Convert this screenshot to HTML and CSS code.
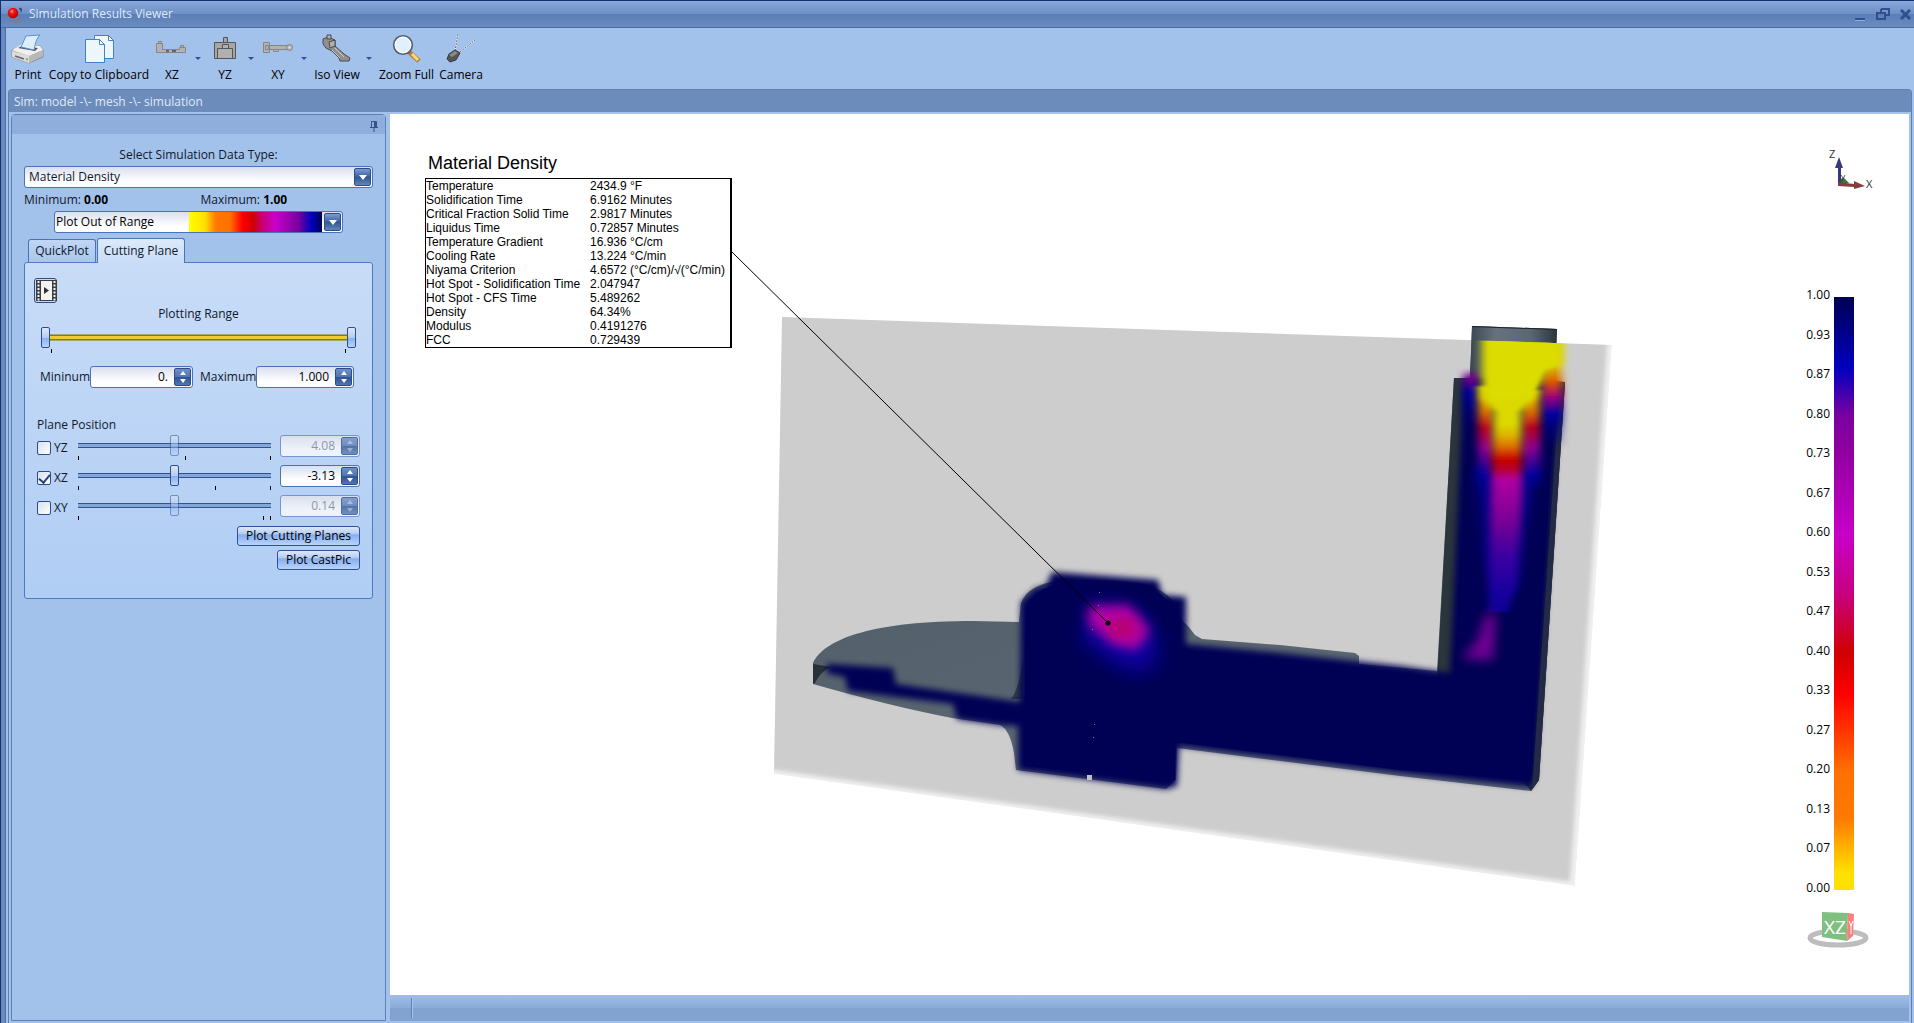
FILE: index.html
```html
<!DOCTYPE html>
<html lang="en">
<head>
<meta charset="utf-8">
<title>Simulation Results Viewer</title>
<link rel="stylesheet" href="styles.css">
</head>
<body>
<div class="window">
  <header class="titlebar">
    <svg class="app-icon" width="18" height="18" viewBox="0 0 18 18">
      <defs><radialGradient id="ball" cx=".4" cy=".35" r=".7"><stop offset="0" stop-color="#ff8a8a"/><stop offset=".35" stop-color="#f01010"/><stop offset="1" stop-color="#b00000"/></radialGradient></defs>
      <ellipse cx="10" cy="16" rx="6" ry="1.6" fill="#7b7f8c"/>
      <circle cx="6" cy="8" r="5.3" fill="url(#ball)"/>
      <path d="M12.5 3.5q2-1 2 .8t-1 3M12.5 3.5q0 2 1.8 1" fill="none" stroke="#2b3d66"/>
    </svg>
    <h1 class="title">Simulation Results Viewer</h1>
    <div class="window-controls">
      <button aria-label="Minimize"><svg width="14" height="14" viewBox="0 0 14 14"><path d="M2 11h10v2H2z" fill="#2f4f8f"/><path d="M2 13h10v1H2z" fill="#8fb0e0"/></svg></button>
      <button aria-label="Restore"><svg width="14" height="14" viewBox="0 0 14 14"><path d="M5 2h8v6h-3M5 2v3" fill="none" stroke="#2f4f8f" stroke-width="2"/><path d="M1 6h8v6H1z" fill="none" stroke="#2f4f8f" stroke-width="2"/></svg></button>
      <button aria-label="Close"><svg width="14" height="14" viewBox="0 0 14 14"><path d="M2 3l9 9M11 3l-9 9" stroke="#2f4f8f" stroke-width="3"/></svg></button>
    </div>
  </header>

  <nav class="toolbar" aria-label="Tools">
    <button class="tool tool-print">
      <svg width="34" height="30" viewBox="0 0 34 30">
        <path d="M1 16l10-5 18 1 3 4v7l-14 6L1 23z" fill="#b4b4b4" stroke="#777" stroke-width=".7"/>
        <path d="M1 16l10-6 18 2 3 4-14 6z" fill="#f0f0f0"/><path d="M7 14l4-2 16 2-3 3z" fill="#555"/>
        <path d="M10 13l5-11 14-1q-4 3-6 15z" fill="#dceefc" stroke="#5b93cd"/>
        <path d="M1 17l17 5v7L1 23z" fill="#dcdcdc"/><path d="M18 22l14-6v6l-14 7z" fill="#b8b8b8"/><path d="M4 22l9 3" stroke="#666" stroke-width="1.500" fill="none"/>
        <path d="M15 24l2 .5v2l-2-.5z" fill="#5fc838"/>
      </svg><span>Print</span></button>
    <button class="tool tool-copy">
      <svg width="34" height="30" viewBox="0 0 34 30">
        <g fill="#eef6fe" stroke="#3f83c6"><path d="M12.500 1.500h14l5 5v18h-19z"/><path d="M26.500 1.500v5h5z" fill="#fff"/><path d="M3.500 5.500h14l5 5v18h-19z"/><path d="M17.500 5.500v5h5z" fill="#fff"/></g>
      </svg><span>Copy to Clipboard</span></button>
    <button class="tool tool-axis">
      <svg width="34" height="30" viewBox="0 0 34 30"><g fill="#b2b2b2" stroke="#868686"><path d="M1.500 9.500h6v6h17v-2h6v5h-29z"/><path d="M3.500 7.500h3v2h-3zM25.500 11.500h3v2h-3z"/></g><path d="M11 16h3v2h-3zM17 16h4v2h-4z" fill="#666"/></svg><span>XZ</span></button>
    <button class="caret" aria-label="XZ options"></button>
    <button class="tool tool-axis">
      <svg width="34" height="30" viewBox="0 0 34 30"><g fill="#a6a6a6" stroke="#555"><path d="M15.500 3.500h4v5h-4zM6.500 8.500h21v16h-21z"/><path d="M9.500 14.500h15v10h-15zM14.500 10.500h6v4h-6z" fill="#b0b0b0"/></g></svg><span>YZ</span></button>
    <button class="caret" aria-label="YZ options"></button>
    <button class="tool tool-axis">
      <svg width="34" height="30" viewBox="0 0 34 30"><g fill="#b2b2b2" stroke="#868686"><path d="M2.500 8.500h6v10h-6zM8.500 11.500h18v4h-18z"/><circle cx="28.500" cy="13.500" r="3"/><path d="M4.500 11.500h3v4h-3zM12.500 15.500h5v2h-5z"/></g><circle cx="28.500" cy="13.500" r="1" fill="#eee"/></svg><span>XY</span></button>
    <button class="caret" aria-label="XY options"></button>
    <button class="tool tool-iso">
      <svg width="34" height="30" viewBox="0 0 34 30"><g fill="#909090" stroke="#4a4a4a"><path d="M3 5l5-2 7 3v6l9 8 6 4-1 3h-9l-1-3-7-7-6-3-3-4z"/><path d="M7 1h4v4H7zM9 8l6-2v6l-5 2z" fill="#b0b0b0"/><path d="M15 14l9 9M12 16l8 8" stroke="#ccc"/></g></svg><span>Iso View</span></button>
    <button class="caret" aria-label="Iso View options"></button>
    <button class="tool tool-zoom">
      <svg width="34" height="30" viewBox="0 0 34 30"><path d="M19 18l10 9" stroke="#b08040" stroke-width="5"/><path d="M22 20l6 6" stroke="#ffd97a" stroke-width="3"/><circle cx="13" cy="11" r="9.300" fill="#e0f0fc" stroke="#555c66" stroke-width="1.600"/><circle cx="13" cy="11" r="7.800" fill="none" stroke="#fff"/></svg><span>Zoom Full</span></button>
    <button class="tool tool-camera">
      <svg width="34" height="30" viewBox="0 0 34 30"><path d="M11 17l3-17M16 18l15-12" stroke="#eef2f8" stroke-width="1.500"/><path d="M11 17l3-17M16 18l15-12" stroke="#666" stroke-dasharray="2 1"/><path d="M5 20l6-4 5 3-4 7-6 2-3-3z" fill="#555" stroke="#3a3a3a"/><path d="M5 21l6-4 3 2-6 4z" fill="#8a8a8a"/></svg><span>Camera</span></button>
  </nav>

  <main class="frame">
    <h2 class="frame-title">Sim: model -\- mesh -\- simulation</h2>
    <div class="workspace">
      <aside class="panel">
        <div class="panel-head"><button aria-label="Pin panel"><svg width="8" height="11" viewBox="0 0 8 11"><path d="M1.500 6V.5h5V6M0 6.500h8M4 6.500V11" fill="none" stroke="#35528c"/><path d="M4 1h2v5H4z" fill="#35528c"/></svg></button></div>
        <div class="panel-body">
          <label class="type-label" for="datatype">Select Simulation Data Type:</label>
          <div class="combo">
            <select id="datatype"><option>Material Density</option></select>
            <span class="combo-arrow"></span>
          </div>
          <div class="limits"><span>Minimum: <b>0.00</b></span><span>Maximum: <b>1.00</b></span></div>
          <div class="combo combo-range">
            <select aria-label="Out of range colors"><option>Plot Out of Range</option></select>
            <span class="combo-ramp"></span>
            <span class="combo-arrow"></span>
          </div>
          <div class="tabs" role="tablist">
            <button class="tab" role="tab" aria-selected="false">QuickPlot</button>
            <button class="tab tab-active" role="tab" aria-selected="true">Cutting Plane</button>
          </div>
          <section class="tab-page">
            <button class="film" aria-label="Play animation"><svg width="21" height="21" viewBox="0 0 21 21"><path d="M0 0h21v21H0z" fill="#3e3e3e"/><path d="M5 1h11v19H5z" fill="#f3f3f3"/><path d="M2.500 1v20M18.500 1v20" stroke="#f3f3f3" stroke-width="2" stroke-dasharray="2 1.500"/><path d="M8 7l5 3.500-5 3.500z" fill="#333"/></svg></button>
            <div class="range-title">Plotting Range</div>
            <div class="dual">
              <span class="dual-track"></span>
              <input type="range" min="0" max="100" value="0" aria-label="Range minimum">
              <input type="range" min="0" max="100" value="100" aria-label="Range maximum">
            </div>
            <div class="ticks ticks-dual"><i></i><i></i></div>
            <div class="bounds">
              <label for="minv">Mininum</label>
              <div class="spin"><input id="minv" type="text" value="0."><span class="spin-btns"><button aria-label="Increase"></button><button aria-label="Decrease"></button></span></div>
              <label for="maxv">Maximum</label>
              <div class="spin"><input id="maxv" type="text" value="1.000"><span class="spin-btns"><button aria-label="Increase"></button><button aria-label="Decrease"></button></span></div>
            </div>
            <h3 class="plane-title">Plane Position</h3>
            <div class="plane plane-off">
              <label><input type="checkbox">YZ</label>
              <div class="track"><input type="range" value="50" disabled aria-label="YZ position"><div class="ticks"><i></i><i style="margin-left:106px"></i><i></i></div></div>
              <div class="spin"><input type="text" value="4.08" disabled aria-label="YZ value"><span class="spin-btns"><button disabled aria-label="Increase"></button><button disabled aria-label="Decrease"></button></span></div>
            </div>
            <div class="plane">
              <label><input type="checkbox" checked>XZ</label>
              <div class="track"><input type="range" value="50" aria-label="XZ position"><div class="ticks"><i></i><i style="margin-left:136px"></i><i></i></div></div>
              <div class="spin"><input type="text" value="-3.13" aria-label="XZ value"><span class="spin-btns"><button aria-label="Increase"></button><button aria-label="Decrease"></button></span></div>
            </div>
            <div class="plane plane-off">
              <label><input type="checkbox">XY</label>
              <div class="track"><input type="range" value="50" disabled aria-label="XY position"><div class="ticks"><i></i><i style="margin-left:184px"></i><i></i></div></div>
              <div class="spin"><input type="text" value="0.14" disabled aria-label="XY value"><span class="spin-btns"><button disabled aria-label="Increase"></button><button disabled aria-label="Decrease"></button></span></div>
            </div>
            <div class="actions">
              <button class="btn">Plot Cutting Planes</button>
              <button class="btn">Plot CastPic</button>
            </div>
          </section>
        </div>
      </aside>

      <div class="viewer">
        <div class="canvas">
          <svg class="scene" viewBox="390 114 1519 881" preserveAspectRatio="xMinYMin meet">
            <defs>
              <filter id="b2" x="-20%" y="-20%" width="140%" height="140%"><feGaussianBlur stdDeviation="2"/></filter>
              <filter id="b3" x="-30%" y="-20%" width="160%" height="140%"><feGaussianBlur stdDeviation="3"/></filter>
              <filter id="bx" x="-60%" y="-5%" width="220%" height="110%"><feGaussianBlur stdDeviation="4 1"/></filter>
              <filter id="b6" x="-50%" y="-50%" width="200%" height="200%"><feGaussianBlur stdDeviation="6"/></filter>
              <filter id="b10" x="-60%" y="-60%" width="220%" height="220%"><feGaussianBlur stdDeviation="10"/></filter>
              <clipPath id="planeClip"><path d="M782 317L1612 345 1575 886 774 774z"/></clipPath>
              <linearGradient id="disc" x1="0" y1="0" x2=".6" y2="1"><stop offset="0" stop-color="#4a5660"/><stop offset="1" stop-color="#5e6b76"/></linearGradient>
              <linearGradient id="stub" x1="0" x2="1"><stop offset="0" stop-color="#3a4650"/><stop offset=".3" stop-color="#66737f"/><stop offset=".7" stop-color="#5a6772"/><stop offset="1" stop-color="#2a343c"/></linearGradient>
              <linearGradient id="core" gradientUnits="userSpaceOnUse" x1="0" y1="340" x2="0" y2="620">
                <stop offset="0" stop-color="#dcdc00"/><stop offset=".3" stop-color="#dcd800"/><stop offset=".34" stop-color="#dcb400"/><stop offset=".38" stop-color="#dc7000"/><stop offset=".43" stop-color="#c40000"/><stop offset=".455" stop-color="#b80020"/><stop offset=".5" stop-color="#b000a0"/><stop offset=".65" stop-color="#780096"/><stop offset=".76" stop-color="#4000a0"/><stop offset=".9" stop-color="#1800a0"/><stop offset="1" stop-color="#0a0090"/></linearGradient>
              <linearGradient id="left" gradientUnits="userSpaceOnUse" x1="0" y1="390" x2="0" y2="490">
                <stop offset="0" stop-color="#dcd000"/><stop offset=".22" stop-color="#dc7000"/><stop offset=".38" stop-color="#b80020"/><stop offset=".58" stop-color="#900090"/><stop offset=".85" stop-color="#0000a0"/><stop offset="1" stop-color="#000090" stop-opacity="0"/></linearGradient>
              <linearGradient id="edge" gradientUnits="userSpaceOnUse" x1="0" y1="365" x2="0" y2="450">
                <stop offset="0" stop-color="#dccc00"/><stop offset=".2" stop-color="#dc5800"/><stop offset=".38" stop-color="#a00080"/><stop offset=".58" stop-color="#0000a0"/><stop offset="1" stop-color="#000070" stop-opacity="0"/></linearGradient>
              <linearGradient id="rim" gradientUnits="userSpaceOnUse" x1="0" y1="368" x2="0" y2="440">
                <stop offset="0" stop-color="#780090" stop-opacity="0"/><stop offset=".15" stop-color="#780090"/><stop offset=".35" stop-color="#0000a0"/><stop offset="1" stop-color="#000070" stop-opacity="0"/></linearGradient>
            </defs>
            <g clip-path="url(#planeClip)"><path d="M782 317L1612 345 1575 886 774 774z" fill="#f0f0f0"/><path d="M740 300L1620 330 1607 345 1570 881 1566 881 740 765z" fill="#cdcdcd" filter="url(#b2)"/></g>
            <!-- casting body -->
            <path d="M813 663C825 638 875 621 973 621L1019 622 1021 603C1026 590 1040 583 1057 581Q1100 577 1140 583 1175 590 1182 620L1188 626 1195 635 1202 639 1280 645 1355 653 1359 656V664L1437 671 1454 378H1470L1472 326 1557 329 1555 381 1565 382 1539 780 1531 791 1400 776 1177 748 1176 780 1166 789 1016 770 1014 753Q1010 730 1000 725L952 718Q890 706 813 684z" fill="url(#disc)"/>
            <path d="M1454 378H1470L1471 360 1555 360V381L1565 382 1539 780 1531 791 1437 680z" fill="#2a353c"/>
            <path d="M1472 326l85 3-2 52-85-3z" fill="url(#stub)"/>
            <path d="M1472 326l85 3v1l-85-3z" fill="#1c2429"/>
            <path d="M813 664l18 3q-11 5-16 16l-2 1z" fill="#283138"/>
            <path d="M1011 699q8-10 12-40v40z" fill="#303b48"/>
            <!-- plotted section -->
            <path d="M1052 572L1158 580 1162 595 1186 597V644L1280 653 1400 666 1450 673 1464 378 1560 386 1535 779 1530 787 1400 773 1179 746 1177 786 1166 789 1018 770V726L1000 725 957 719 953 704 848 691 845 677 827 673V664L893 668 896 684 1020 702 1021 602 1036 588 1046 586z" fill="#000054" filter="url(#b3)"/>
            <path d="M1026 610Q1034 588 1060 584H1140Q1168 592 1178 618L1175 780 1024 766zM1172 656L1400 676 1454 684 1470 400 1555 400 1530 780 1400 770 1176 742z" fill="#000054"/>
            <path d="M1565 383L1539 780 1531 791 1533 775 1559 400z" fill="#232a48"/>
            <path d="M1092 602L1140 610 1160 645 1150 672 1120 668 1082 640z" fill="#0a00b0" opacity=".85" filter="url(#b10)"/>
            <path d="M1089 606L1129 605 1150 630 1137 650 1114 645 1088 624z" fill="#b400a4" filter="url(#b6)"/>
            <ellipse cx="1122" cy="628" rx="14" ry="9" fill="#b8006c" filter="url(#b6)"/>
            <path d="M1087 775h5v5h-5z" fill="#bfc0d0"/>
            <path d="M1099 592h1v1h-1zM1098 605h1v1h-1zM1092 629h1v1h-1zM1094 724h1v1h-1zM1093 737h1v1h-1z" fill="#777a9c"/>
            <!-- riser -->
            <g clip-path="url(#planeClip)">
              <path d="M1474 470L1482 520 1484 560 1500 600 1516 590 1524 530 1538 470z" fill="#0000a0" opacity=".7" filter="url(#b6)"/>
              <path d="M1464 366h14v74h-14z" fill="url(#rim)" filter="url(#bx)"/>
              <path d="M1542 330h20v120h-20z" fill="url(#edge)" filter="url(#bx)"/>
              <path d="M1478 386h16v104h-16zM1522 390h18v104h-18z" fill="url(#left)" filter="url(#bx)"/>
              <path d="M1482 330H1562V364L1546 370 1534 398 1522 412 1522 500 1517 580 1508 612 1488 612 1490 540 1493 412 1482 398z" fill="url(#core)" filter="url(#bx)"/>
              <path d="M1490 330H1556V362L1542 372 1530 400H1490z" fill="#dcdc00" filter="url(#b2)"/>
            </g>
            <path d="M1486 614h10l-3 46-32-2 16-16z" fill="#82009c" opacity=".9" filter="url(#b6)"/>
            <!-- annotation leader -->
            <path d="M732 252L1108 623" stroke="#000"/><circle cx="1108" cy="623" r="2.500"/>
            <!-- axis triad -->
            <path d="M1841 184q-2-7 3-6l5 5z" fill="#2f7a38"/>
            <path d="M1838 184V168h-3l4-11 4 11h-2v16z" fill="#38387e"/>
            <path d="M1838 182l16 2v-3l11 5-11 3v-2l-16-1z" fill="#863c3c"/>
            <g class="axis-text"><text x="1829" y="158">Z</text><text x="1866" y="188">X</text></g>
            <path d="M1841 175l2 3m2-3l-3 6" stroke="#333" stroke-width=".8"/>
            <!-- view cube -->
            <ellipse cx="1838" cy="938" rx="28" ry="7" fill="none" stroke="#bdbdbd" stroke-width="5"/>
            <path d="M1822 912l26 1-1 28-25-4z" fill="#7fc081"/><path d="M1848 913l6 1-1 22-6 5z" fill="#ff7f7f"/>
            <text class="cube-text" x="1824" y="934">XZ</text>
            <path d="M1849 921l2 5v8m2-13l-2 5" stroke="#fff" fill="none"/>
          </svg>

          <div class="probe">
            <h3>Material Density</h3>
            <table>
              <tr><th>Temperature</th><td>2434.9 °F</td></tr>
              <tr><th>Solidification Time</th><td>6.9162 Minutes</td></tr>
              <tr><th>Critical Fraction Solid Time</th><td>2.9817 Minutes</td></tr>
              <tr><th>Liquidus Time</th><td>0.72857 Minutes</td></tr>
              <tr><th>Temperature Gradient</th><td>16.936 °C/cm</td></tr>
              <tr><th>Cooling Rate</th><td>13.224 °C/min</td></tr>
              <tr><th>Niyama Criterion</th><td>4.6572 (°C/cm)/√(°C/min)</td></tr>
              <tr><th>Hot Spot - Solidification Time</th><td>2.047947</td></tr>
              <tr><th>Hot Spot - CFS Time</th><td>5.489262</td></tr>
              <tr><th>Density</th><td>64.34%</td></tr>
              <tr><th>Modulus</th><td>0.4191276</td></tr>
              <tr><th>FCC</th><td>0.729439</td></tr>
            </table>
          </div>

          <div class="legend">
            <ol>
              <li>1.00</li><li>0.93</li><li>0.87</li><li>0.80</li><li>0.73</li><li>0.67</li><li>0.60</li><li>0.53</li><li>0.47</li><li>0.40</li><li>0.33</li><li>0.27</li><li>0.20</li><li>0.13</li><li>0.07</li><li>0.00</li>
            </ol>
            <span class="legend-ramp"></span>
          </div>
        </div>
        <footer class="statusbar"><span></span></footer>
      </div>
    </div>
  </main>
</div>
</body>
</html>
```
FILE: styles.css
```css
* { box-sizing: border-box; }
body {
  margin: 0;
  font: 12px/16px "Open Sans", "Noto Sans", sans-serif;
  color: #10182c;
  background: #a3c2eb;
}
h1, h2, h3 { margin: 0; font-weight: 400; font-size: inherit; }
button, input, select { font: inherit; color: inherit; margin: 0; padding: 0; border: 0; background: none; }
svg { display: block; }

.window {
  min-height: 100vh;
  display: flex;
  flex-direction: column;
  border-top: 1px solid #12306e;
  border-left: 1px solid #12306e;
  background: linear-gradient(90deg, #6a8abf 4px, #4c6ea8 4px, #4c6ea8 5px, #a3c2eb 5px);
}
.titlebar {
  display: flex;
  align-items: center;
  height: 27px;
  padding: 0 1px 0 6px;
  gap: 4px;
  border-bottom: 1px solid #4a6ca4;
  background: linear-gradient(#8aa8da, #6c8fc6 50%, #5a7eb6 51%, #6a8cc0);
}
.title { flex: 1; color: #dfeafa; }
.window-controls { display: flex; gap: 9px; }

.toolbar {
  display: flex;
  height: 61px;
  padding-left: 4px;
  margin-left: 5px;
  color: #000;
}
.tool {
  display: flex;
  flex-direction: column;
  align-items: center;
  padding-top: 6px;
  gap: 3px;
  white-space: nowrap;
}
.tool-print { width: 36px; }
.tool-copy { width: 106px; }
.tool-axis { width: 40px; }
.tool-iso { width: 52px; }
.tool-zoom { width: 61px; }
.tool-camera { width: 48px; }
.caret { width: 13px; display: flex; padding: 29px 0 0 3px; }
.caret::after { content: ""; border: 3px solid transparent; border-top-color: #2f4f9f; border-bottom: 0; }

.frame {
  flex: 1;
  display: flex;
  flex-direction: column;
  margin: 0 2px 0 7px;
  border: 1px solid #5f80b4;
  border-bottom: 0;
  border-radius: 4px 4px 0 0;
}
.frame-title {
  height: 22px;
  padding: 4px 5px 0;
  color: #dfeafa;
  background: #6c8cbc;
}
.workspace { flex: 1; display: flex; gap: 4px; padding: 2px; }

.panel {
  flex: none;
  width: 375px;
  border: 1px solid #5f80b4;
  border-radius: 4px 4px 0 0;
}
.panel-head { display: flex; justify-content: flex-end; padding: 6px 7px; height: 19px; background: #8faedb; }
.panel-body { padding: 13px 12px; display: flex; flex-direction: column; }
.type-label { align-self: center; margin-bottom: 3px; }

.combo {
  display: grid;
  grid-template-columns: 1fr auto 18px;
  align-items: center;
  height: 22px;
  border: 1px solid #4a74b8;
  border-radius: 3px;
  background: linear-gradient(#dadfee, #fff 70%);
}
.combo select { appearance: none; grid-area: 1 / 1 / 2 / 4; height: 20px; padding-left: 4px; outline: 0; }
.combo-arrow {
  grid-area: 1 / 3;
  pointer-events: none;
  width: 17px;
  height: 18px;
  border: 1px solid #2c4d8a;
  border-radius: 2px;
  background: linear-gradient(#7d9bcf, #3a5f9f 50%, #31568f 51%, #5f86c0);
  display: grid;
  place-items: center;
}
.combo-arrow::after { content: ""; border: 4px solid transparent; border-top: 5px solid #fff; border-bottom: 0; }
.limits { display: grid; grid-template-columns: 1fr 1fr; gap: 4px; padding: 4px 0 3px; }
.limits b { color: #000; }
.combo-range { margin: 0 30px; }
.combo-range select { padding-left: 1px; color: #000; }
.combo-ramp {
  grid-area: 1 / 2;
  pointer-events: none;
  width: 133px;
  height: 20px;
  margin-right: 2px;
  background: linear-gradient(90deg, #ff0, #ffe000 12%, #ff7a00 20%, #ff7000 31%, #f00 40%, #d00000 48%, #c80080 56%, #c800c8 65%, #7a00a0 82%, #0000c0 92%, #000054);
}

.tabs { display: flex; align-items: flex-end; gap: 1px; margin-top: 5px; padding-left: 4px; }
.tab {
  height: 23px;
  width: 68px;
  border: 1px solid #4a74b8;
  border-bottom: 0;
  border-radius: 3px 3px 0 0;
  background: linear-gradient(#c0d6f4, #a9c6ee);
}
.tab-active { width: 88px; height: 25px; margin-bottom: -1px; padding-bottom: 1px; background: linear-gradient(#dceafb, #c8dcf7); z-index: 1; }
.tab-page {
  min-height: 337px;
  border: 1px solid #4a7cc0;
  border-radius: 3px;
  background: linear-gradient(#c8dcf7, #b0cdf4);
  padding: 15px 12px 0;
}
.film { margin-left: -3px; padding: 1px; border: 1px solid #2c4d8a; border-radius: 3px; width: 23px; height: 25px; display: grid; place-items: center; }
.range-title { text-align: center; margin: 3px 0 5px; }

input[type="range"] {
  appearance: none;
  display: block;
  width: 100%;
  height: 21px;
}
.track input[type="range"] { background: linear-gradient(#2f5291 1px, #86a6d8 1px, #86a6d8 4px, #2f5291 4px) center / 100% 5px no-repeat; }
input[type="range"]::-webkit-slider-thumb {
  appearance: none;
  width: 9px;
  height: 21px;
  border: 1px solid #2c4d8a;
  border-radius: 2px;
  background: linear-gradient(#dbe6f6, #b4cdf2 50%, #86aef0 51%, #b9d4fb);
}
input[type="range"]:disabled::-webkit-slider-thumb { opacity: .5; }
.dual { display: grid; grid-template-columns: 1fr; align-items: center; margin: 0 4px; }
.dual > * { grid-area: 1 / 1; }
.dual-track { height: 7px; margin: 0 8px; background: linear-gradient(#a8a870 1px, #80743c 1px, #80743c 2px, #f0cc30 2px, #f0cc30 5px, #80743c 5px, #80743c 6px, #a8a870 6px); }
.dual input[type="range"] { background: none; pointer-events: none; }
.dual input::-webkit-slider-thumb { pointer-events: auto; }
.ticks { display: flex; height: 4px; }
.ticks i { width: 1px; height: 4px; background: #000; }
.ticks i:last-child { margin-left: auto; }
.ticks-dual { margin: 1px 14px; }

.bounds { display: grid; grid-template-columns: 47px 103px 57px 98px; column-gap: 3px; align-items: center; margin: 13px 0 29px 3px; }
.bounds label:nth-of-type(2) { padding-left: 4px; }
.spin {
  display: grid;
  grid-template-columns: 1fr 18px;
  align-items: center;
  height: 22px;
  border: 1px solid #4a74b8;
  border-radius: 3px;
  background: linear-gradient(#dadfee, #fff 70%);
}
.spin input { min-width: 0; width: 100%; text-align: right; padding-right: 6px; color: #000; }
.spin-btns { display: grid; width: 17px; height: 18px; border: 1px solid #2c4d8a; border-radius: 2px; background: linear-gradient(#6f8fc6, #4f75b4 48%, #2f5291 50%, #4f75b4); }
.spin-btns button { display: grid; place-items: center; }
.spin-btns button::after { content: ""; border: 3px solid transparent; border-bottom: 4px solid #fff; border-top: 0; }
.spin-btns button:last-child::after { border: 3px solid transparent; border-top: 4px solid #fff; border-bottom: 0; }

.plane-title { margin-bottom: 2px; }
.plane { display: grid; grid-template-columns: 41px 202px 80px; height: 30px; }
.plane label { display: flex; align-items: center; gap: 3px; height: 26px; }
.plane-off .spin { background: linear-gradient(#dadfee, #eef3fb 70%); border-color: #7597cf; }
.plane-off .spin input { color: #8e98a8; }
.plane-off .spin-btns { opacity: .8; }
.plane-off .spin-btns button::after { opacity: .4; }
.track { width: 193px; }
input[type="checkbox"] { appearance: none; width: 14px; height: 14px; border: 1px solid #2c4d8a; border-radius: 2px; background: linear-gradient(135deg, #d9e0ee, #fff); display: grid; place-items: center; }
input[type="checkbox"]:checked::after { content: ""; width: 5px; height: 9px; margin-bottom: 2px; border: solid #2c3f78; border-width: 0 2px 2px 0; transform: rotate(40deg); }

.actions { display: flex; flex-direction: column; align-items: flex-end; gap: 4px; margin-top: 1px; }
.btn {
  height: 20px;
  padding: 0 8px;
  color: #000;
  border: 1px solid #2f5291;
  border-radius: 3px;
  background: linear-gradient(#dbe7f8, #b9d0f2 35%, #86aef0 45%, #b9d4fb);
}

.viewer { flex: 1; min-width: 0; display: flex; flex-direction: column; }
.canvas { flex: 1; position: relative; background: #fff; }
.scene { width: 100%; height: auto; }
.axis-text { font: 11px "Open Sans", sans-serif; fill: #333; }
.cube-text { font: 19px "Open Sans", sans-serif; fill: #fff; }
.statusbar { height: 26px; padding: 3px 21px; background: linear-gradient(#a0bee8, #8aabd8 50%, #82a2d0 50%); }
.statusbar span { display: block; width: 2px; height: 20px; border-left: 1px solid #5f80b4; border-right: 1px solid #a9c4ea; }

.probe { position: absolute; left: 35px; top: 38px; color: #000; font: 12px/14px "Liberation Sans", Arial, sans-serif; }
.probe h3 { font-size: 18px; line-height: 22px; padding: 0 3px; margin-bottom: 4px; }
.probe table { width: 307px; height: 170px; border: 1px solid #000; border-right-width: 2px; border-spacing: 0; table-layout: fixed; }
.probe th, .probe td { padding: 0; font-weight: 400; text-align: left; white-space: nowrap; line-height: 14px; height: 14px; }
.probe th { width: 164px; }

.legend { position: absolute; right: 55px; top: 173px; display: flex; gap: 4px; color: #000; }
.legend ol { list-style: none; margin: 0; padding: 0; display: flex; flex-direction: column; justify-content: space-between; height: 609px; text-align: right; }
.legend-ramp {
  width: 20px;
  height: 593px;
  margin-top: 10px;
  background: linear-gradient(#000054, #0000c0 12%, #7a00a0 20%, #9000a0 26%, #c800c8 40%, #c80080 50%, #d00000 60%, #f00 67%, #ff7000 80%, #ff7a00 88%, #ffe000 97%);
}
```
